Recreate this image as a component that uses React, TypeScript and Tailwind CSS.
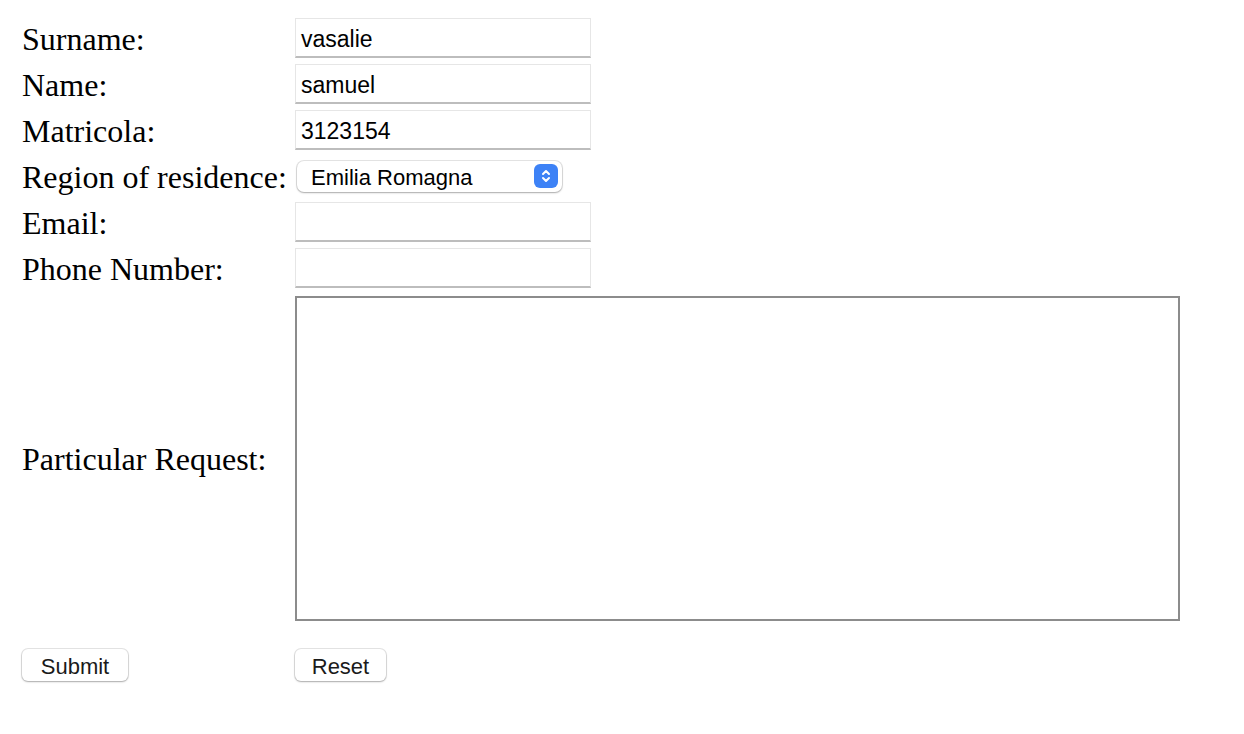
import React from 'react'

const serif = { fontFamily: '"Liberation Serif", "Times New Roman", serif' }
const sans = { fontFamily: '"Liberation Sans", Arial, sans-serif' }

function Field({ value }: { value?: string }) {
  return (
    <div className="flex h-[40px] w-[296px] items-center border border-[#e6e6e6] border-b-[#bdbdbd] border-b-2 bg-white px-[5px] pt-[4px] text-[23px] text-black" style={sans}>
      {value}
    </div>
  )
}

function Label({ children }: { children: React.ReactNode }) {
  return (
    <div className="flex items-center pt-[2px] text-[32px] leading-none text-black" style={serif}>
      {children}
    </div>
  )
}

export default function App() {
  return (
    <div className="min-h-[734px] bg-white pl-[22px] pt-[18px]">
      <div className="grid grid-cols-[273px_auto] gap-y-[6px]">
        <Label>Surname:</Label>
        <Field value="vasalie" />
        <Label>Name:</Label>
        <Field value="samuel" />
        <Label>Matricola:</Label>
        <Field value="3123154" />
        <Label>Region of residence:</Label>
        <div className="flex h-[40px] items-center">
          <div className="ml-[2px] flex h-[31px] w-[265px] items-center justify-between rounded-[7px] bg-white pl-[14px] pr-[4px] text-[22px] text-black shadow-[0_0_0_1px_rgba(0,0,0,0.1),0_1px_2px_rgba(0,0,0,0.25)]" style={sans}>
            <span className="pt-[2px]">Emilia Romagna</span>
            <span className="flex h-[24px] w-[24px] items-center justify-center rounded-[6px] bg-[#3d82f6]">
              <svg width="12" height="16" viewBox="0 0 12 16" fill="none" stroke="white" strokeWidth="2" strokeLinecap="round" strokeLinejoin="round">
                <path d="M3 6 L6 3 L9 6" />
                <path d="M3 10 L6 13 L9 10" />
              </svg>
            </span>
          </div>
        </div>
        <Label>Email:</Label>
        <Field />
        <Label>Phone Number:</Label>
        <Field />
        <Label>Particular Request:</Label>
        <div className="mt-[2px] h-[325px] w-[885px] border-2 border-[#8c8c8c] bg-white" />
      </div>
      <div className="mt-[28px] grid grid-cols-[273px_auto]" style={sans}>
        <div>
          <button type="button" className="h-[32px] w-[106px] rounded-[6px] bg-white pt-[1px] text-[22px] text-[#1a1a1a] shadow-[0_0_0_1px_rgba(0,0,0,0.1),0_1px_2px_rgba(0,0,0,0.25)]">
            Submit
          </button>
        </div>
        <div>
          <button type="button" className="h-[32px] w-[91px] rounded-[6px] bg-white pt-[1px] text-[22px] text-[#1a1a1a] shadow-[0_0_0_1px_rgba(0,0,0,0.1),0_1px_2px_rgba(0,0,0,0.25)]">
            Reset
          </button>
        </div>
      </div>
    </div>
  )
}
